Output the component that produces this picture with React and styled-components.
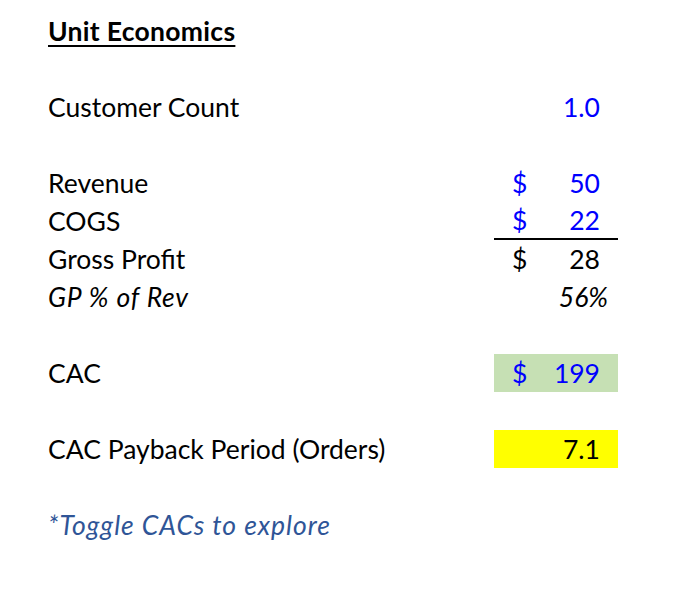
import React from "react"
import styled, { createGlobalStyle } from "styled-components"

const GlobalStyle = createGlobalStyle`
  body {
    margin: 0;
    background: #ffffff;
  }
`

const Sheet = styled.div`
  display: grid;
  grid-template-columns: 446px 124px;
  grid-auto-rows: 38px;
  padding: 12px 0 0 48px;
  font-family: Lato, "Open Sans", sans-serif;
  font-size: 26.5px;
  color: #000;
`

const Label = styled.div`
  display: flex;
  align-items: center;
  white-space: nowrap;
  font-style: ${(p) => (p.$italic ? "italic" : "normal")};
  font-weight: ${(p) => (p.$bold ? 700 : 400)};
  text-decoration: ${(p) => (p.$underline ? "underline" : "none")};
  text-underline-offset: 4px;
  text-decoration-thickness: 2px;
  letter-spacing: ${(p) => p.$ls || 0}px;
  color: ${(p) => p.$color || "inherit"};
  grid-column: ${(p) => (p.$wide ? "1 / span 2" : "auto")};
`

const Value = styled.div`
  display: flex;
  align-items: center;
  justify-content: space-between;
  padding: 0 ${(p) => p.$pr || 18}px 0 18px;
  color: ${(p) => (p.$input ? "#0000ff" : "#000")};
  background: ${(p) => p.$fill || "transparent"};
  font-style: ${(p) => (p.$italic ? "italic" : "normal")};
  border-bottom: ${(p) => (p.$rule ? "2px solid #000" : "none")};
  box-sizing: border-box;
`

const Gap = styled.div`
  grid-column: 1 / span 2;
`

const Money = ({ v, ...rest }) => (
  <Value {...rest}>
    <span>$</span>
    <span>{v}</span>
  </Value>
)

const Plain = ({ v, ...rest }) => (
  <Value {...rest}>
    <span />
    <span>{v}</span>
  </Value>
)

export default function App() {
  return (
    <>
      <GlobalStyle />
      <Sheet>
        <Label $bold $underline $wide $ls={0.3}>Unit Economics</Label>
        <Gap />
        <Label>Customer Count</Label>
        <Plain v="1.0" $input />
        <Gap />
        <Label>Revenue</Label>
        <Money v="50" $input />
        <Label>COGS</Label>
        <Money v="22" $input $rule />
        <Label>Gross Profit</Label>
        <Money v="28" />
        <Label $italic $ls={0.8}>GP % of Rev</Label>
        <Plain v="56%" $italic $pr={10} />
        <Gap />
        <Label>CAC</Label>
        <Money v="199" $input $fill="#c6e0b4" />
        <Gap />
        <Label>CAC Payback Period (Orders)</Label>
        <Plain v="7.1" $fill="#ffff00" />
        <Gap />
        <Label $italic $wide $ls={0.95} $color="#2f5597">*Toggle CACs to explore</Label>
      </Sheet>
    </>
  )
}
